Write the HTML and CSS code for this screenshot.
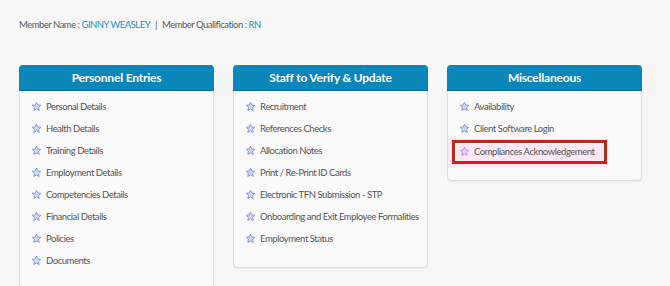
FILE: index.html
```html
<!DOCTYPE html>
<html lang="en">
<head>
<meta charset="UTF-8">
<title>Member Dashboard</title>
<link rel="stylesheet" href="styles.css">
</head>
<body>
<div class="member-info">
Member Name : <span class="hl">GINNY WEASLEY</span><span class="sep">|</span>Member Qualification : <span class="hl">RN</span>
</div>
<div class="panels">
<div class="panel tall">
<div class="panel-head">Personnel Entries</div>
<ul>
<li><svg class="star" viewBox="0 0 24 24"><path d="M12 2.5l2.9 6.1 6.6.8-4.9 4.6 1.3 6.6L12 17.3l-5.9 3.3 1.3-6.6-4.9-4.6 6.6-.8z"/></svg>Personal Details</li>
<li><svg class="star" viewBox="0 0 24 24"><path d="M12 2.5l2.9 6.1 6.6.8-4.9 4.6 1.3 6.6L12 17.3l-5.9 3.3 1.3-6.6-4.9-4.6 6.6-.8z"/></svg>Health Details</li>
<li><svg class="star" viewBox="0 0 24 24"><path d="M12 2.5l2.9 6.1 6.6.8-4.9 4.6 1.3 6.6L12 17.3l-5.9 3.3 1.3-6.6-4.9-4.6 6.6-.8z"/></svg>Training Details</li>
<li><svg class="star" viewBox="0 0 24 24"><path d="M12 2.5l2.9 6.1 6.6.8-4.9 4.6 1.3 6.6L12 17.3l-5.9 3.3 1.3-6.6-4.9-4.6 6.6-.8z"/></svg>Employment Details</li>
<li><svg class="star" viewBox="0 0 24 24"><path d="M12 2.5l2.9 6.1 6.6.8-4.9 4.6 1.3 6.6L12 17.3l-5.9 3.3 1.3-6.6-4.9-4.6 6.6-.8z"/></svg>Competencies Details</li>
<li><svg class="star" viewBox="0 0 24 24"><path d="M12 2.5l2.9 6.1 6.6.8-4.9 4.6 1.3 6.6L12 17.3l-5.9 3.3 1.3-6.6-4.9-4.6 6.6-.8z"/></svg>Financial Details</li>
<li><svg class="star" viewBox="0 0 24 24"><path d="M12 2.5l2.9 6.1 6.6.8-4.9 4.6 1.3 6.6L12 17.3l-5.9 3.3 1.3-6.6-4.9-4.6 6.6-.8z"/></svg>Policies</li>
<li><svg class="star" viewBox="0 0 24 24"><path d="M12 2.5l2.9 6.1 6.6.8-4.9 4.6 1.3 6.6L12 17.3l-5.9 3.3 1.3-6.6-4.9-4.6 6.6-.8z"/></svg>Documents</li>
</ul>
</div>
<div class="panel">
<div class="panel-head">Staff to Verify &amp; Update</div>
<ul>
<li><svg class="star" viewBox="0 0 24 24"><path d="M12 2.5l2.9 6.1 6.6.8-4.9 4.6 1.3 6.6L12 17.3l-5.9 3.3 1.3-6.6-4.9-4.6 6.6-.8z"/></svg>Recruitment</li>
<li><svg class="star" viewBox="0 0 24 24"><path d="M12 2.5l2.9 6.1 6.6.8-4.9 4.6 1.3 6.6L12 17.3l-5.9 3.3 1.3-6.6-4.9-4.6 6.6-.8z"/></svg>References Checks</li>
<li><svg class="star" viewBox="0 0 24 24"><path d="M12 2.5l2.9 6.1 6.6.8-4.9 4.6 1.3 6.6L12 17.3l-5.9 3.3 1.3-6.6-4.9-4.6 6.6-.8z"/></svg>Allocation Notes</li>
<li><svg class="star" viewBox="0 0 24 24"><path d="M12 2.5l2.9 6.1 6.6.8-4.9 4.6 1.3 6.6L12 17.3l-5.9 3.3 1.3-6.6-4.9-4.6 6.6-.8z"/></svg>Print / Re-Print ID Cards</li>
<li><svg class="star" viewBox="0 0 24 24"><path d="M12 2.5l2.9 6.1 6.6.8-4.9 4.6 1.3 6.6L12 17.3l-5.9 3.3 1.3-6.6-4.9-4.6 6.6-.8z"/></svg>Electronic TFN Submission - STP</li>
<li><svg class="star" viewBox="0 0 24 24"><path d="M12 2.5l2.9 6.1 6.6.8-4.9 4.6 1.3 6.6L12 17.3l-5.9 3.3 1.3-6.6-4.9-4.6 6.6-.8z"/></svg>Onboarding and Exit Employee Formalities</li>
<li><svg class="star" viewBox="0 0 24 24"><path d="M12 2.5l2.9 6.1 6.6.8-4.9 4.6 1.3 6.6L12 17.3l-5.9 3.3 1.3-6.6-4.9-4.6 6.6-.8z"/></svg>Employment Status</li>
</ul>
</div>
<div class="panel">
<div class="panel-head">Miscellaneous</div>
<ul>
<li><svg class="star" viewBox="0 0 24 24"><path d="M12 2.5l2.9 6.1 6.6.8-4.9 4.6 1.3 6.6L12 17.3l-5.9 3.3 1.3-6.6-4.9-4.6 6.6-.8z"/></svg>Availability</li>
<li><svg class="star" viewBox="0 0 24 24"><path d="M12 2.5l2.9 6.1 6.6.8-4.9 4.6 1.3 6.6L12 17.3l-5.9 3.3 1.3-6.6-4.9-4.6 6.6-.8z"/></svg>Client Software Login</li>
<li class="marked"><svg class="star" viewBox="0 0 24 24"><path d="M12 2.5l2.9 6.1 6.6.8-4.9 4.6 1.3 6.6L12 17.3l-5.9 3.3 1.3-6.6-4.9-4.6 6.6-.8z"/></svg>Compliances Acknowledgement</li>
</ul>
</div>
</div>
</body>
</html>
```
FILE: styles.css
```css
* {
margin: 0;
padding: 0;
box-sizing: border-box;
}
body {
background-color: #f7f7f7;
font-family: Lato, "Open Sans", sans-serif;
color: #555;
padding: 19px 19px 0;
}
/* Member line */
.member-info {
font-size: 9.5px;
letter-spacing: -0.5px;
color: #5a5a5a;
height: 46px;
}
.member-info .hl {
color: #1c8fbd;
}
.member-info .sep {
margin: 0 5px;
}
/* Panels */
.panels {
display: flex;
gap: 19px;
align-items: flex-start;
}
.panel {
width: 195px;
background-color: #fafafa;
border: 1px solid #ddd;
border-radius: 4px;
padding-bottom: 18px;
box-shadow: 0 1px 1px rgba(0, 0, 0, 0.05);
}
.panel.tall {
height: 240px;
}
.panel-head {
background-color: #0b86b9;
color: #fff;
text-align: center;
font-size: 12px;
font-weight: bold;
letter-spacing: -0.2px;
height: 26px;
line-height: 26px;
margin: -1px -1px 0;
border-radius: 4px 4px 0 0;
border-bottom: 1px solid #096e98;
}
.panel ul {
list-style: none;
padding: 4px 3px 0;
}
.panel li {
height: 22px;
font-size: 9.5px;
letter-spacing: -0.45px;
color: #555;
padding-left: 8px;
display: flex;
align-items: center;
white-space: nowrap;
}
.star {
width: 11px;
height: 11px;
margin-right: 4px;
fill: #cdd8f6;
stroke: #7d93de;
stroke-width: 2;
stroke-linejoin: round;
}
.panel li.marked {
position: relative;
margin-top: 1px;
isolation: isolate;
}
.panel li.marked .star {
fill: #ead2f6;
stroke: #b98ade;
}
/* annotation: pink wash and red outline */
.panel li.marked::before {
content: "";
position: absolute;
left: -3px;
width: 160px;
top: -1px;
bottom: -5px;
background-color: #fde8f6;
z-index: -1;
}
.panel li.marked::after {
content: "";
position: absolute;
left: 1px;
width: 151px;
top: 0;
bottom: -2px;
border: 2px solid #e01818;
box-shadow: inset 0 0 0 1px #7a4520;
}
```
